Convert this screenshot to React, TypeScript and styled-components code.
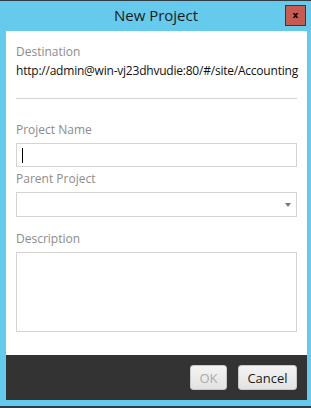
import React from 'react';
import styled, { createGlobalStyle } from 'styled-components';

const FONT = '"Open Sans", "Noto Sans", "Liberation Sans", sans-serif';

const GlobalStyle = createGlobalStyle`
  html, body {
    margin: 0;
    padding: 0;
    background: #ffffff;
  }
`;

const Window = styled.div`
  display: flex;
  flex-direction: column;
  width: 311px;
  height: 408px;
  box-sizing: border-box;
  background: #65caeb;
  border-top: 1px solid #2e3b42;
  border-bottom: 2px solid #2e3b42;
  font-family: ${FONT};
`;

const TitleBar = styled.div`
  display: grid;
  grid-template-columns: 1fr auto 1fr;
  align-items: start;
  height: 30px;
  padding: 4px 5px 0 6px;
  box-sizing: border-box;
`;

const Title = styled.div`
  grid-column: 2;
  font-size: 15px;
  line-height: 20px;
  color: #1a1a1a;
`;

const CloseButton = styled.button`
  grid-column: 3;
  justify-self: end;
  width: 21px;
  height: 21px;
  padding: 0;
  border: 1px solid #5a2a28;
  background: #c75b50;
  color: #000;
  font-family: "DejaVu Sans", sans-serif;
  font-size: 9px;
  font-weight: bold;
  line-height: 17px;
`;

const Body = styled.div`
  display: flex;
  flex-direction: column;
  margin: 0 4px 0 6px;
  padding: 13px 10px 0 10px;
  background: #ffffff;
  height: 324px;
  box-sizing: border-box;
`;

const Label = styled.div<{ $top?: number }>`
  margin-top: ${({ $top }) => $top ?? 0}px;
  font-size: 12px;
  line-height: 16px;
  color: #8c8c8c;
`;

const Value = styled.div`
  margin-top: 3px;
  font-size: 12px;
  line-height: 16px;
  letter-spacing: -0.22px;
  color: #111;
  white-space: nowrap;
`;

const Rule = styled.hr`
  margin: 19px 0 0 0;
  border: none;
  border-top: 1px solid #d2d2d2;
  height: 0;
`;

const Field = styled.div<{ $height: number }>`
  display: flex;
  align-items: center;
  margin-top: 5px;
  height: ${({ $height }) => $height}px;
  border: 1px solid #d3d3d3;
  box-sizing: border-box;
  padding: 0 5px;
`;

const Caret = styled.span`
  width: 1px;
  height: 15px;
  background: #000;
`;

const Arrow = styled.span`
  margin-left: auto;
  width: 0;
  height: 0;
  border-left: 3px solid transparent;
  border-right: 3px solid transparent;
  border-top: 4px solid #777;
`;

const Footer = styled.div`
  display: flex;
  justify-content: flex-end;
  align-items: center;
  gap: 11px;
  margin: 0 4px 0 6px;
  height: 45px;
  padding: 0 10px 0 0;
  background: #333333;
`;

const Button = styled.button<{ $disabled?: boolean; $width: number }>`
  width: ${({ $width }) => $width}px;
  height: 25px;
  padding: 0;
  border: 1px solid #c8c8c8;
  border-radius: 3px;
  background: linear-gradient(#f4f4f4, #e2e2e2);
  color: ${({ $disabled }) => ($disabled ? '#aaaaaa' : '#1a1a1a')};
  font-family: ${FONT};
  font-size: 13px;
`;

const App: React.FC = () => (
  <>
    <GlobalStyle />
    <Window>
      <TitleBar>
        <Title>New Project</Title>
        <CloseButton>x</CloseButton>
      </TitleBar>
      <Body>
        <Label>Destination</Label>
        <Value>http://admin@win-vj23dhvudie:80/#/site/Accounting</Value>
        <Rule />
        <Label $top={23}>Project Name</Label>
        <Field $height={24}>
          <Caret />
        </Field>
        <Label $top={4}>Parent Project</Label>
        <Field $height={25}>
          <Arrow />
        </Field>
        <Label $top={14}>Description</Label>
        <Field $height={80} />
      </Body>
      <Footer>
        <Button $disabled $width={37}>OK</Button>
        <Button $width={59}>Cancel</Button>
      </Footer>
    </Window>
  </>
);

export default App;
